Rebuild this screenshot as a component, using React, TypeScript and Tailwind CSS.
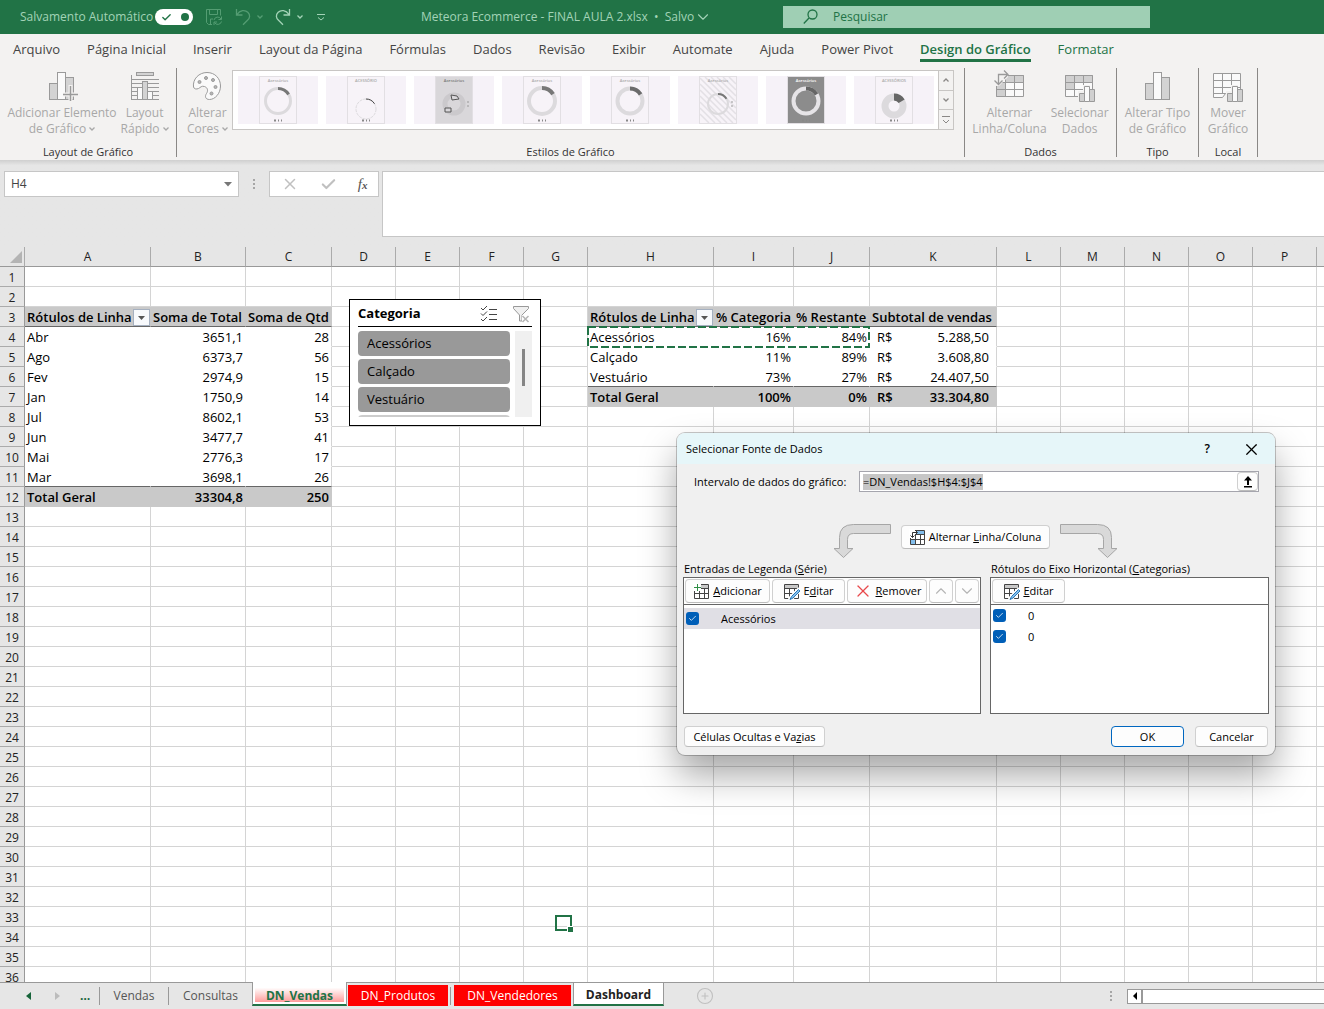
import { useEffect, useRef } from 'react';
import type { ReactNode } from 'react';
import { Check, ChevronDown, ChevronUp, CirclePlus, X } from 'lucide-react';
import clsx from 'clsx';

type Cell = { text?: string; prefix?: string; right?: boolean; filter?: boolean; edge?: boolean; kind: 'head' | 'body' | 'last' | 'total' };

const columns = [
  { name: 'A', width: 'w-[126px]' },
  { name: 'B', width: 'w-[95px]' },
  { name: 'C', width: 'w-[86px]' },
  { name: 'D', width: 'w-16' },
  { name: 'E', width: 'w-16' },
  { name: 'F', width: 'w-16' },
  { name: 'G', width: 'w-16' },
  { name: 'H', width: 'w-[126px]' },
  { name: 'I', width: 'w-20' },
  { name: 'J', width: 'w-[76px]' },
  { name: 'K', width: 'w-[127px]' },
  { name: 'L', width: 'w-16' },
  { name: 'M', width: 'w-16' },
  { name: 'N', width: 'w-16' },
  { name: 'O', width: 'w-16' },
  { name: 'P', width: 'w-16' },
  { name: '', width: 'w-16' },
];

const months = [
  ['Abr', '3651,1', '28'],
  ['Ago', '6373,7', '56'],
  ['Fev', '2974,9', '15'],
  ['Jan', '1750,9', '14'],
  ['Jul', '8602,1', '53'],
  ['Jun', '3477,7', '41'],
  ['Mai', '2776,3', '17'],
  ['Mar', '3698,1', '26'],
];

const categories = [
  ['Acessórios', '16%', '84%', '5.288,50'],
  ['Calçado', '11%', '89%', '3.608,80'],
  ['Vestuário', '73%', '27%', '24.407,50'],
];

const cells: Record<string, Cell> = {
  A3: { text: 'Rótulos de Linha', filter: true, kind: 'head' },
  B3: { text: 'Soma de Total', kind: 'head' },
  C3: { text: 'Soma de Qtd', kind: 'head' },
  A12: { text: 'Total Geral', kind: 'total' },
  B12: { text: '33304,8', right: true, kind: 'total' },
  C12: { text: '250', right: true, kind: 'total' },
  H3: { text: 'Rótulos de Linha', filter: true, kind: 'head' },
  I3: { text: '% Categoria', kind: 'head' },
  J3: { text: '% Restante', kind: 'head' },
  K3: { text: 'Subtotal de vendas', kind: 'head' },
  H7: { text: 'Total Geral', kind: 'total' },
  I7: { text: '100%', right: true, kind: 'total' },
  J7: { text: '0%', right: true, kind: 'total' },
  K7: { text: '33.304,80', prefix: 'R$', right: true, kind: 'total' },
};

months.forEach(([name, total, qty], i) => {
  const row = i + 4;
  const kind = i === months.length - 1 ? 'last' : 'body';
  cells[`A${row}`] = { text: name, kind };
  cells[`B${row}`] = { text: total, right: true, kind };
  cells[`C${row}`] = { text: qty, right: true, edge: true, kind };
});

categories.forEach(([name, share, rest, subtotal], i) => {
  const row = i + 4;
  const kind = i === categories.length - 1 ? 'last' : 'body';
  cells[`H${row}`] = { text: name, kind };
  cells[`I${row}`] = { text: share, right: true, kind };
  cells[`J${row}`] = { text: rest, right: true, kind };
  cells[`K${row}`] = { text: subtotal, prefix: 'R$', right: true, edge: true, kind };
});

const menuTabs = ['Arquivo', 'Página Inicial', 'Inserir', 'Layout da Página', 'Fórmulas', 'Dados', 'Revisão', 'Exibir', 'Automate', 'Ajuda', 'Power Pivot', 'Design do Gráfico', 'Formatar'];

/* ---------- icons ---------- */

function SaveIcon() {
  return (
    <svg width="18" height="18" viewBox="0 0 18 18" fill="none" stroke="#549d73">
      <path d="M7 16.500H3.500L1.500 14.500V1.500h14v6M4.500 1.500v5h8v-5M5.500 16v-5H8" />
      <path d="M9 12a3.800 3.800 0 0 1 7-1M16.500 8.500v3h-3M16.500 13.500a3.800 3.800 0 0 1-7 1M9 17v-3h3" />
    </svg>
  );
}

function UndoIcon({ flip = false }: { flip?: boolean }) {
  return (
    <svg width="16" height="18" viewBox="0 0 16 18" fill="none" stroke={flip ? '#a3d3b7' : '#549d73'} strokeWidth="1.300">
      {flip ? <path d="M14.500 1v6h-6M14 6.500C11 2 6 1.500 3.200 4.300.5 7 1 10 3.500 12.300L8 16.800" /> : <path d="M1.500 1v6h6M2 6.500C5 2 10 1.500 12.800 4.300 15.500 7 15 10 12.500 12.300L8 16.800" />}
    </svg>
  );
}

function SearchIcon() {
  return (
    <svg width="15" height="16" viewBox="0 0 15 16" fill="none" stroke="#217346" strokeWidth="1.300" className="shrink-0">
      <circle cx="9.500" cy="5.500" r="4.500" />
      <path d="M6 9L.8 14.500" />
    </svg>
  );
}

function SmallChevron() {
  return (
    <svg width="6" height="4" viewBox="0 0 6 4" fill="none" stroke="currentColor" strokeWidth="1.300">
      <path d="M.5.500L3 3 5.500.500" />
    </svg>
  );
}

function BarsIcon({ plus = false }: { plus?: boolean }) {
  return (
    <svg width="32" height="32" viewBox="0 0 32 32" stroke="#9a9a9a">
      <rect x="3.500" y="13.500" width="8" height="16" fill="#d3d3d3" />
      <rect x="19.500" y="7.500" width="8" height="22" fill="#d3d3d3" />
      <rect x="11.500" y="2.500" width="8" height="27" fill="#fafafa" />
      {plus && <path d="M24.500 15v17M17 24.500h15" stroke="#f3f2f1" strokeWidth="4" />}
      {plus && <path d="M24.500 16v15M17 24.500h15" strokeWidth="1.500" />}
    </svg>
  );
}

function QuickLayoutIcon() {
  return (
    <svg width="32" height="32" viewBox="0 0 32 32" stroke="#9a9a9a" fill="none">
      <path d="M2.500 5v24.500M2 9.500h28M2 13.500h28M2 17.500h28M2 21.500h28M2 25.500h28M2 29.500h28" />
      <rect x="7.500" y="2.500" width="17" height="3" fill="#d3d3d3" />
      <rect x="8.500" y="17.500" width="5" height="12" fill="#fafafa" />
      <rect x="18.500" y="21.500" width="5" height="8" fill="#fafafa" />
      <rect x="13.500" y="11.500" width="5" height="18" fill="#d3d3d3" />
    </svg>
  );
}

function PaletteIcon() {
  return (
    <svg width="32" height="32" viewBox="0 0 32 32" stroke="#9a9a9a" fill="#fafafa">
      <path d="M2.500 17C1.500 9 8 2.500 16 2.500c8 0 13.500 6 13.500 13.500S24 29.500 18.500 29.500c-4 0-5-3-3-6s1-6-2-7-4 1-6 2-4.500.5-5-1.500z" />
      <g fill="#b5b5b5">
        <circle cx="8.500" cy="12" r="1.500" />
        <circle cx="15" cy="8" r="1.500" />
        <circle cx="22" cy="10" r="1.500" />
        <circle cx="24.500" cy="17" r="1.500" />
        <circle cx="20.500" cy="23.500" r="1.500" />
      </g>
    </svg>
  );
}

function SwitchIcon() {
  return (
    <svg width="32" height="32" viewBox="0 0 32 32" stroke="#9a9a9a" fill="none">
      <path d="M3.500 5.500h27v21h-27z" fill="#fafafa" />
      <path d="M12.500 5.500h18v7h-18zM3.500 12.500h9v14h-9z" fill="#d0d0d0" />
      <path d="M3.500 12.500h27M3.500 19.500h27M12.500 5.500v21M21.500 5.500v21" />
      <path d="M0 0h15v7L6 16H0z" fill="#f3f2f1" stroke="none" />
      <path d="M5.500 14.500v-10h9.500M1.500 10.500l4 4 4-4M11 .5l4 4-4 4" strokeWidth="1.300" />
    </svg>
  );
}

function TableChartIcon({ move = false }: { move?: boolean }) {
  return (
    <svg width="32" height="32" viewBox="0 0 32 32" stroke="#9a9a9a" fill="none">
      {move ? (
        <g>
          <path d="M1.500 3.500h27v20h-15l-3 4h-9z" fill="#fafafa" />
          <path d="M1.500 10.500h27M1.500 17.500h27M1.500 23.500h12M10.500 3.500v20M19.500 3.500v14" />
        </g>
      ) : (
        <g>
          <path d="M1.500 5.500h27v21h-27z" fill="#fafafa" />
          <path d="M1.500 5.500h27v7h-18v7h-9z" fill="#d0d0d0" />
          <path d="M1.500 12.500h27M1.500 19.500h27M10.500 5.500v21M19.500 5.500v21" />
        </g>
      )}
      <path d="M14 21h5v-6h7v4h6v13H14z" fill="#f3f2f1" stroke="none" />
      <path d="M15.500 23.500h5v8h-5zM25.500 19.500h5v12h-5z" fill="#d0d0d0" />
      <path d="M20.500 16.500h5v15h-5z" fill="#fafafa" />
    </svg>
  );
}

function TableIcon({ mode }: { mode: 'add' | 'edit' | 'switch' }) {
  return (
    <svg width="17" height="17" viewBox="0 0 17 17" fill="none" stroke="#444">
      <path d="M1.500 1.500h14v14h-14z" fill="#fff" />
      {mode === 'switch' ? <path d="M7 2h8v4H7zM2 11h4v4H2z" fill="#83beec" stroke="none" /> : <path d="M2 2h13v3H2z" fill="#c8c8c8" stroke="none" />}
      <path d="M1.500 5.500h14M1.500 10.500h14M6.500 5v10M11.500 5v10" />
      {mode === 'add' && (
        <g>
          <path d="M0 0h8v8H0z" fill="#fff" stroke="none" />
          <path d="M4.500 1v7M1 4.500h7" stroke="#2f8f46" />
        </g>
      )}
      {mode === 'edit' && (
        <g>
          <path d="M17 6L9 14l-2 3" stroke="#fff" strokeWidth="5" />
          <path d="M15.500 6.500l-7 7-1.500 3 3-1.500 7-7z" fill="#83beec" stroke="#2a7ab9" />
        </g>
      )}
      {mode === 'switch' && (
        <g>
          <path d="M0 0h6v9H0z" fill="#fff" stroke="none" />
          <path d="M3.500 8.500v-5h5M1.500 6.500l2 2 2-2M6.500 1.500l2 2-2 2" stroke="#333" />
        </g>
      )}
    </svg>
  );
}

function BentArrow({ flip = false }: { flip?: boolean }) {
  return (
    <svg width="58" height="36" viewBox="0 1 58 36" fill="#d9d9d9" stroke="#a6a6a6">
      {flip ? <path d="M.5 1.500h37q14 0 14 13v11h5.500L47.500 34.500l-9.500-9h5.500v-9q0-6-6-6H.5z" /> : <path d="M57.500 1.500h-37q-14 0-14 13v11H1l9.500 9 9.500-9h-5.500v-9q0-6 6-6h37z" />}
    </svg>
  );
}

/* ---------- title bar and ribbon ---------- */

function TitleBar() {
  return (
    <header className="flex h-[34px] shrink-0 items-center bg-[#217346] text-[12px] text-[#a3d3b7]">
      <div className="flex w-[421px] items-center pl-5">
        <label htmlFor="autosave" className="w-[135px] whitespace-nowrap">Salvamento Automático</label>
        <button id="autosave" role="switch" aria-checked="true" className="flex h-4 w-[38px] items-center justify-between rounded-full bg-white pr-1 pl-1.5 text-[#217346]">
          <Check size={11} strokeWidth={3} />
          <span className="size-2 rounded-full bg-[#217346]" />
        </button>
        <div className="ml-3 flex items-center">
          <button aria-label="Salvar"><SaveIcon /></button>
          <button aria-label="Desfazer" className="ml-3 flex items-center gap-1.5 text-[#549d73]"><UndoIcon /><SmallChevron /></button>
          <button aria-label="Refazer" className="ml-3 flex items-center gap-1.5"><UndoIcon flip /><SmallChevron /></button>
          <button aria-label="Personalizar" className="ml-3.5">
            <svg width="8" height="8" viewBox="0 0 8 8" fill="none" stroke="#a3d3b7"><path d="M0 1.500h8M1 4.500l3 2.500 3-2.500" /></svg>
          </button>
        </div>
      </div>
      <button className="flex w-[362px] items-center whitespace-nowrap">
        Meteora Ecommerce - FINAL AULA 2.xlsx&nbsp; •&nbsp; Salvo
        <ChevronDown size={18} strokeWidth={1.5} />
      </button>
      <div className="flex h-[22px] w-[367px] items-center gap-[15px] bg-[#9fcfb4] pl-5 text-[#217346]">
        <SearchIcon />
        <input aria-label="Pesquisar" placeholder="Pesquisar" className="w-full bg-transparent outline-none placeholder:text-[#217346]" />
      </div>
    </header>
  );
}

function RibbonButton({ icon, lines, menu = false }: { icon: ReactNode; lines: string[]; menu?: boolean }) {
  return (
    <button className="flex flex-col items-center text-[12px] leading-4 whitespace-nowrap text-[#a8a8a8]">
      {icon}
      <span className="mt-[3px]">{lines[0]}</span>
      <span className="flex items-center gap-[3px]">
        {lines[1]}
        {menu && <SmallChevron />}
      </span>
    </button>
  );
}

function RibbonGroup({ label, width, children }: { label: string; width: string; children: ReactNode }) {
  return (
    <section className={clsx('flex h-[89px] shrink-0 flex-col border-r border-[#8a8886]', width)}>
      <div className="flex flex-1 items-start justify-center gap-1 pt-0.5">{children}</div>
      <div className="h-[11px] text-center text-[11px] leading-[11px] text-[#333]">{label}</div>
    </section>
  );
}

type ThumbProps = { r?: number; w?: number; bg?: string; ring?: string; arc?: string; title?: string; titleColor?: string; cy?: number; hatch?: boolean; exploded?: boolean; side?: boolean; dashed?: boolean };

function ChartThumb({ r = 12.5, w = 3, bg = '#f7f3f8', ring = '#dcdadd', arc = '#777', title = 'Acessórios', titleColor = '#aaa', cy = 25, hatch, exploded, side, dashed }: ThumbProps) {
  const length = 2 * Math.PI * r;
  return (
    <button aria-label="Estilo de gráfico" className="h-12 w-20 bg-[#f6f2f8]">
      <svg width="80" height="48" viewBox="0 0 80 48" fill="none">
        <rect x="21.500" y=".5" width="37" height="47" fill={bg} stroke="#e2dfe3" />
        {hatch && <path d="M22 38l9 9M22 32l15 15M22 26l21 21M22 20l27 27M22 14l33 33M22 8l36 36M22 2l36 36M27 1l31 31M33 1l25 25M39 1l19 19M45 1l13 13M51 1l7 7" stroke="#e3e0e5" strokeWidth="1.500" />}
        <text x="40" y="6" fontSize="4" fontWeight="600" textAnchor="middle" fill={titleColor}>{title}</text>
        <circle cx="40" cy={cy} r={r} stroke={ring} strokeWidth={w} strokeDasharray={dashed ? '3 1' : undefined} />
        {!exploded && <circle cx="40" cy={cy} r={r} stroke={arc} strokeWidth={w} strokeDasharray={`${length * 0.16} ${length}`} transform={`rotate(-90 40 ${cy})`} />}
        {exploded && <path d="M37 19l6 1 2 3-7 1zM31 32h6v4h-6z" fill="#d9d7da" stroke={arc} />}
        {side ? <path d="M54 25v2M54 29v2" stroke="#999" /> : <path d="M36 44.500h2M40 44.500h1M43 44.500h1" stroke="#888" strokeWidth="2" />}
      </svg>
    </button>
  );
}

function Ribbon() {
  const arrow = 'flex w-full flex-1 items-center justify-center border-[#c8c6c4] bg-[#f3f2f1] text-[#8a8886]';
  return (
    <div className="h-[126px] shrink-0 bg-[#f3f2f1]">
      <nav className="flex h-[34px] items-start gap-[27px] pl-[13px] text-[13px] whitespace-nowrap text-[#444]">
        {menuTabs.map((tab) => (
          <a
            key={tab}
            href="#"
            className={clsx(
              'h-7 leading-[31px]',
              tab === 'Design do Gráfico' && 'border-b-3 border-[#217346] font-semibold text-[#217346]',
              tab === 'Formatar' && 'text-[#217346]',
            )}
          >
            {tab}
          </a>
        ))}
      </nav>
      <div className="flex">
        <RibbonGroup label="Layout de Gráfico" width="w-[177px]">
          <RibbonButton icon={<BarsIcon plus />} lines={['Adicionar Elemento', 'de Gráfico']} menu />
          <RibbonButton icon={<QuickLayoutIcon />} lines={['Layout', 'Rápido']} menu />
        </RibbonGroup>
        <RibbonGroup label="Estilos de Gráfico" width="w-[788px]">
          <RibbonButton icon={<PaletteIcon />} lines={['Alterar', 'Cores']} menu />
          <div className="flex h-[60px] w-[722px] border border-[#c8c6c4] bg-white">
            <div className="flex flex-1 items-center gap-2 pl-[5px]">
              <ChartThumb />
              <ChartThumb title="ACESSÓRIO" r={10} w={1} cy={33} arc="#444" dashed />
              <ChartThumb bg="#d9d7da" ring="#cbc9cc" arc="#555" r={9} w={5} cy={28} titleColor="#777" side exploded />
              <ChartThumb r={13} w={4} />
              <ChartThumb w={4} arc="#6b6b6b" />
              <ChartThumb r={10} w={2} cy={28} hatch side />
              <ChartThumb bg="#8c8c8c" ring="#e6e4e7" arc="#666" w={4} titleColor="#fff" />
              <ChartThumb title="ACESSÓRIOS" r={9} w={7} cy={30} arc="#666" />
            </div>
            <div className="flex w-[15px] flex-col border-l border-[#c8c6c4]">
              <button aria-label="Linha anterior" className={arrow}><span className="rotate-180"><SmallChevron /></span></button>
              <button aria-label="Próxima linha" className={clsx(arrow, 'border-y')}><SmallChevron /></button>
              <button aria-label="Mais estilos" className={arrow}>
                <svg width="8" height="8" viewBox="0 0 8 8" fill="none" stroke="currentColor"><path d="M0 .5h8M1 4l3 3 3-3" /></svg>
              </button>
            </div>
          </div>
        </RibbonGroup>
        <RibbonGroup label="Dados" width="w-[152px]">
          <RibbonButton icon={<SwitchIcon />} lines={['Alternar', 'Linha/Coluna']} />
          <RibbonButton icon={<TableChartIcon />} lines={['Selecionar', 'Dados']} />
        </RibbonGroup>
        <RibbonGroup label="Tipo" width="w-[82px]">
          <RibbonButton icon={<BarsIcon />} lines={['Alterar Tipo', 'de Gráfico']} />
        </RibbonGroup>
        <RibbonGroup label="Local" width="w-[59px]">
          <RibbonButton icon={<TableChartIcon move />} lines={['Mover', 'Gráfico']} />
        </RibbonGroup>
      </div>
    </div>
  );
}

function FormulaBar() {
  return (
    <div className="flex h-[87px] shrink-0 items-start bg-gradient-to-b from-[#cfcfcf] to-[#e6e6e6] to-6% pt-[11px] pl-1">
      <div className="flex h-[26px] w-[235px] items-center border border-[#c6c6c6] bg-white px-1.5">
        <input aria-label="Caixa de nome" defaultValue="H4" className="min-w-0 flex-1 text-[12px] text-[#444] outline-none" />
        <button aria-label="Abrir nomes">
          <svg width="8" height="5" viewBox="0 0 8 5" fill="#777"><path d="M0 0h8L4 4.500z" /></svg>
        </button>
      </div>
      <div className="flex h-[26px] w-[30px] items-center justify-center">
        <svg width="2" height="12" viewBox="0 0 2 12" fill="#a6a6a6"><path d="M0 1h2v2H0zM0 5h2v2H0zM0 9h2v2H0z" /></svg>
      </div>
      <div className="flex h-[26px] w-[110px] items-center justify-around border border-[#c6c6c6] bg-white text-[#c0c0c0]">
        <button aria-label="Cancelar entrada"><X size={18} strokeWidth={2} /></button>
        <button aria-label="Confirmar entrada"><Check size={17} strokeWidth={3} /></button>
        <button aria-label="Inserir função" className="font-['Liberation_Serif',serif] text-[15px] leading-none text-[#555] italic">
          f<span className="text-[11px] font-bold">x</span>
        </button>
      </div>
      <textarea aria-label="Barra de fórmulas" className="ml-[3px] h-[66px] flex-1 resize-none border border-r-0 border-[#c6c6c6] bg-white outline-none" />
    </div>
  );
}

/* ---------- sheet ---------- */

function SheetCell({ cell }: { cell?: Cell }) {
  if (!cell) return <td className="border-r border-b border-[#d4d4d4] p-0" />;
  return (
    <td
      className={clsx(
        'border-r border-b p-0 whitespace-nowrap',
        cell.kind === 'head' && 'border-r-[#c9c9c9] border-b-[#666] bg-[#c9c9c9] font-semibold',
        cell.kind === 'body' && 'border-b-white',
        cell.kind === 'last' && 'border-b-[#666]',
        (cell.kind === 'body' || cell.kind === 'last') && (cell.edge ? 'border-r-[#d4d4d4]' : 'border-r-white'),
        cell.kind === 'total' && 'border-[#c9c9c9] bg-[#c9c9c9] font-semibold',
      )}
    >
      <div className={clsx('flex h-[19px] items-center pt-0.5 pl-0.5 leading-[17px]', cell.right && !cell.prefix && 'justify-end pr-0.5', cell.prefix && 'justify-between pr-[7px] pl-[7px]')}>
        {cell.prefix && <span>{cell.prefix}</span>}
        <span>{cell.text}</span>
        {cell.filter && (
          <button aria-label="Filtrar" className="ml-auto flex h-[17px] w-[17px] shrink-0 items-center justify-center border border-[#a5b0c0] bg-[#f7f9fc]">
            <svg width="7" height="4" viewBox="0 0 7 4" fill="#555"><path d="M0 0h7L3.500 4z" /></svg>
          </button>
        )}
      </div>
    </td>
  );
}

function Slicer() {
  return (
    <div className="absolute top-[52px] left-[349px] h-[127px] w-48 border border-black bg-white px-2 text-[13px]">
      <div className="flex h-[27px] items-center border-b border-black pt-px pr-0.5">
        <h2 className="flex-1 font-bold">Categoria</h2>
        <button aria-label="Seleção múltipla" className="mr-3.5">
          <svg width="18" height="17" viewBox="0 0 18 17" fill="none" stroke="#444"><path d="M1 3l2 2 4-4M1 8.500l2 2 4-4M1 14l2 2 4-4M9 4.500h8M9 9.500h8M9 14.500h8" /></svg>
        </button>
        <button aria-label="Limpar filtro">
          <svg width="18" height="18" viewBox="0 0 18 18" fill="none" stroke="#999"><path d="M1.500 1.500h15v2L10 10v6H7.500v-6l-6-6.500z" fill="#f0f0f0" /><path d="M10 10h8v8h-8z" fill="#fff" stroke="none" /><path d="M10.500 11l6 6M16.500 11l-6 6" stroke="#b5b5b5" strokeWidth="1.500" /></svg>
        </button>
      </div>
      <div className="mt-1 flex gap-[5px]">
        <div className="flex h-[86px] w-[152px] flex-col gap-[3px] overflow-hidden">
          {['Acessórios', 'Calçado', 'Vestuário'].map((name) => (
            <button key={name} className="h-[25px] shrink-0 rounded bg-[#999] pl-[9px] text-left">{name}</button>
          ))}
          <div className="h-6 shrink-0 rounded bg-[#ccc]" />
        </div>
        <div className="flex h-[86px] w-[17px] justify-center bg-[#f0f0f0] pt-[18px]">
          <div className="h-[37px] w-[3px] bg-[#858585]" />
        </div>
      </div>
    </div>
  );
}

function Sheet() {
  const rows = Array.from({ length: 36 }, (_, i) => i + 1);
  return (
    <main className="relative min-h-0 flex-1 overflow-hidden bg-white text-[13px] text-black">
      <table className="w-[1381px] table-fixed border-separate border-spacing-0">
        <thead>
          <tr className="h-5 bg-[#e6e6e6] text-[12px] text-[#222]">
            <th className="w-[25px] border-r border-b border-r-[#ababab] border-b-[#999] p-0">
              <svg width="12" height="12" viewBox="0 0 12 12" fill="#b4b4b4" className="ml-2.5"><path d="M12 0v12H0z" /></svg>
            </th>
            {columns.map((col) => (
              <th key={col.name} className={clsx('border-r border-b border-r-[#ababab] border-b-[#999] p-0 leading-[19px] font-normal', col.width)}>{col.name}</th>
            ))}
          </tr>
        </thead>
        <tbody>
          {rows.map((row) => (
            <tr key={row} className="h-5">
              <th className="border-r border-b border-r-[#999] border-b-[#ababab] bg-[#e6e6e6] p-0 pt-0.5 text-[12px] leading-[17px] font-normal text-[#222]">{row}</th>
              {columns.map((col) => (
                <SheetCell key={col.name} cell={cells[`${col.name}${row}`]} />
              ))}
            </tr>
          ))}
        </tbody>
      </table>

      {/* copied range H4:J4 */}
      <svg width="284" height="22" viewBox="0 0 284 22" fill="none" className="pointer-events-none absolute top-[79px] left-[587px]">
        <rect x="1" y="1" width="281" height="20" stroke="#217346" strokeWidth="2" strokeDasharray="8 3" />
      </svg>

      {/* anchor of the chart selection */}
      <div className="absolute top-[668px] left-[555px] h-4 w-[17px] border-2 border-[#217346]">
        <div className="absolute -right-[3px] -bottom-[3px] size-1.5 border-t border-l border-white bg-[#217346]" />
      </div>

      <Slicer />
    </main>
  );
}

function SheetTabs() {
  return (
    <footer className="flex h-[27px] shrink-0 items-stretch border-t border-[#999] bg-[#e6e6e6] text-[12px] whitespace-nowrap text-[#555]">
      <div className="flex w-[99px] items-center gap-6 pl-[26px]">
        <button aria-label="Anterior"><svg width="5" height="8" viewBox="0 0 5 8" fill="#17643a"><path d="M5 0v8L0 4z" /></svg></button>
        <button aria-label="Próxima"><svg width="5" height="8" viewBox="0 0 5 8" fill="#bcbcbc"><path d="M0 0v8l5-4z" /></svg></button>
        <button aria-label="Mais planilhas" className="-ml-1 font-bold text-[#17643a]">…</button>
      </div>
      <button className="my-1 w-[69px] border-l border-[#999]">Vendas</button>
      <button className="my-1 w-[84px] border-l border-[#999]">Consultas</button>
      <button className="-mt-px mb-[3px] w-[95px] border-x border-b-2 border-x-[#999] border-b-[#217346] bg-white p-0.5 font-bold text-[#217346]">
        <span className="block h-full bg-gradient-to-b from-white from-20% to-[#ff9c9c] leading-6">DN_Vendas</span>
      </button>
      <button className="mt-0.5 mb-[3px] ml-px w-[100px] bg-[#ff0000] text-white">DN_Produtos</button>
      <span className="my-1 mr-[3px] ml-0.5 w-px bg-[#999]" />
      <button className="mt-0.5 mb-[3px] w-[117px] bg-[#ff0000] text-white">DN_Vendedores</button>
      <button className="mb-[3px] ml-0.5 w-[91px] border-x border-b-2 border-x-[#999] border-b-[#217346] bg-white pt-[3px] font-bold text-[#222]">Dashboard</button>
      <button aria-label="Nova planilha" className="ml-8 text-[#c0c0c0]"><CirclePlus size={18} strokeWidth={1.5} /></button>
      <div className="ml-auto flex w-[214px] items-center gap-[15px]">
        <svg width="2" height="10" viewBox="0 0 2 10" fill="#a6a6a6"><path d="M0 0h2v2H0zM0 4h2v2H0zM0 8h2v2H0z" /></svg>
        <div className="flex h-[15px] flex-1 border border-r-0 border-[#999] bg-white">
          <button aria-label="Rolar para a esquerda" className="flex w-[15px] items-center justify-center border-r-2 border-[#999]">
            <svg width="4" height="8" viewBox="0 0 4 8"><path d="M4 0v8L0 4z" /></svg>
          </button>
        </div>
      </div>
    </footer>
  );
}

/* ---------- dialog ---------- */

function DialogButton({ children, className, label, primary = false }: { children: ReactNode; className?: string; label?: string; primary?: boolean }) {
  return (
    <button
      aria-label={label}
      className={clsx(
        'flex items-center justify-center gap-[3px] rounded border bg-[#fdfdfd]',
        primary ? 'border-[#0067c0]' : 'border-[#d0d0d0] border-b-[#bcbcbc]',
        className,
      )}
    >
      {children}
    </button>
  );
}

function CheckRow({ id, label, className }: { id: string; label: string; className?: string }) {
  return (
    <div className={clsx('flex h-[21px] items-center gap-[22px] pl-0.5', className)}>
      <span className="grid size-[13px] place-items-center">
        <input id={id} type="checkbox" defaultChecked className="col-start-1 row-start-1 size-[13px] appearance-none rounded-[3px] bg-[#005fb8]" />
        <Check size={9} color="white" strokeWidth={2} className="pointer-events-none col-start-1 row-start-1" />
      </span>
      <label htmlFor={id} className="pt-px">{label}</label>
    </div>
  );
}

function SelectDataDialog() {
  const rangeRef = useRef<HTMLInputElement>(null);

  useEffect(() => {
    rangeRef.current?.focus();
    rangeRef.current?.select();
  }, []);

  return (
    <div role="dialog" aria-labelledby="dialog-title" className="absolute top-[433px] left-[677px] flex h-[322px] w-[598px] flex-col rounded-lg bg-[#f0f0f0] text-[11px] text-black shadow-[0_20px_36px_rgba(0,0,0,0.35),0_0_0_1px_rgba(0,0,0,0.22)]">
      <div className="flex h-[31px] items-center rounded-t-lg bg-[#e6f6f9] pt-px pr-3.5 pl-[9px]">
        <h2 id="dialog-title" className="flex-1">Selecionar Fonte de Dados</h2>
        <button aria-label="Ajuda" className="mr-8 text-[12px] font-semibold">?</button>
        <button aria-label="Fechar"><X size={19} strokeWidth={1.5} /></button>
      </div>

      <div className="flex items-center pt-[7px] pr-4 pl-[17px]">
        <label htmlFor="range" className="w-[165px] pt-px whitespace-nowrap">Intervalo de dados do <u>g</u>ráfico:</label>
        <div className="flex h-[21px] flex-1 border border-[#a5a5ad] bg-white">
          <input ref={rangeRef} id="range" defaultValue="=DN_Vendas!$H$4:$J$4" className="min-w-0 flex-1 pt-px pl-[3px] outline-none selection:bg-[#c6c6c6] selection:text-black" />
          <DialogButton label="Recolher" className="w-[21px]">
            <svg width="10" height="12" viewBox="0 0 10 12"><path d="M5 0l4 4.500H6V9H4V4.500H1zM1 10h8v1.500H1z" /></svg>
          </DialogButton>
        </div>
      </div>

      <div className="mt-8 flex items-start justify-center gap-[10px] pr-0.5">
        <BentArrow />
        <DialogButton className="mt-px h-6 w-[149px]"><TableIcon mode="switch" /><span>Alternar <u>L</u>inha/Coluna</span></DialogButton>
        <BentArrow flip />
      </div>

      <div className="flex gap-[9px] px-1.5">
        <div className="w-[298px]">
          <h3 className="h-[17px] pl-px leading-[17px]">Entradas de Legenda (<u>S</u>érie)</h3>
          <div className="h-[137px] border border-[#666] bg-white">
            <div className="flex h-[27px] gap-0.5 border-b border-[#666] p-px">
              <DialogButton className="w-[85px]"><TableIcon mode="add" /><span><u>A</u>dicionar</span></DialogButton>
              <DialogButton className="w-[73px]"><TableIcon mode="edit" /><span>E<u>d</u>itar</span></DialogButton>
              <DialogButton className="w-20"><X size={20} strokeWidth={1.5} color="#e8484b" /><span><u>R</u>emover</span></DialogButton>
              <DialogButton label="Mover para cima" className="w-6"><ChevronUp size={18} strokeWidth={1.5} color="#b5b5b5" /></DialogButton>
              <DialogButton label="Mover para baixo" className="w-6"><ChevronDown size={18} strokeWidth={1.5} color="#b5b5b5" /></DialogButton>
            </div>
            <CheckRow id="series-0" label="Acessórios" className="mt-[3px] bg-[#e0dfe5]" />
          </div>
        </div>
        <div className="flex-1">
          <h3 className="h-[17px] pl-px leading-[17px]">Rótulos do Eixo Horizontal (<u>C</u>ategorias)</h3>
          <div className="h-[137px] border border-[#666] bg-white">
            <div className="flex h-[27px] border-b border-[#666] p-px">
              <DialogButton className="w-[73px]"><TableIcon mode="edit" /><span><u>E</u>ditar</span></DialogButton>
            </div>
            <CheckRow id="axis-0" label="0" />
            <CheckRow id="axis-1" label="0" />
          </div>
        </div>
      </div>

      <div className="mt-3 flex px-[7px]">
        <DialogButton className="h-[21px] w-[141px] pt-px"><span>Células Ocultas e Va<u>z</u>ias</span></DialogButton>
        <DialogButton primary className="ml-auto h-[21px] w-[73px] pt-px">OK</DialogButton>
        <DialogButton className="ml-[11px] h-[21px] w-[73px] pt-px">Cancelar</DialogButton>
      </div>
    </div>
  );
}

export default function App() {
  return (
    <div className="relative flex h-screen flex-col overflow-hidden bg-[#e6e6e6] font-['Open_Sans','Noto_Sans',sans-serif]">
      <TitleBar />
      <Ribbon />
      <FormulaBar />
      <Sheet />
      <SheetTabs />
      <SelectDataDialog />
    </div>
  );
}
